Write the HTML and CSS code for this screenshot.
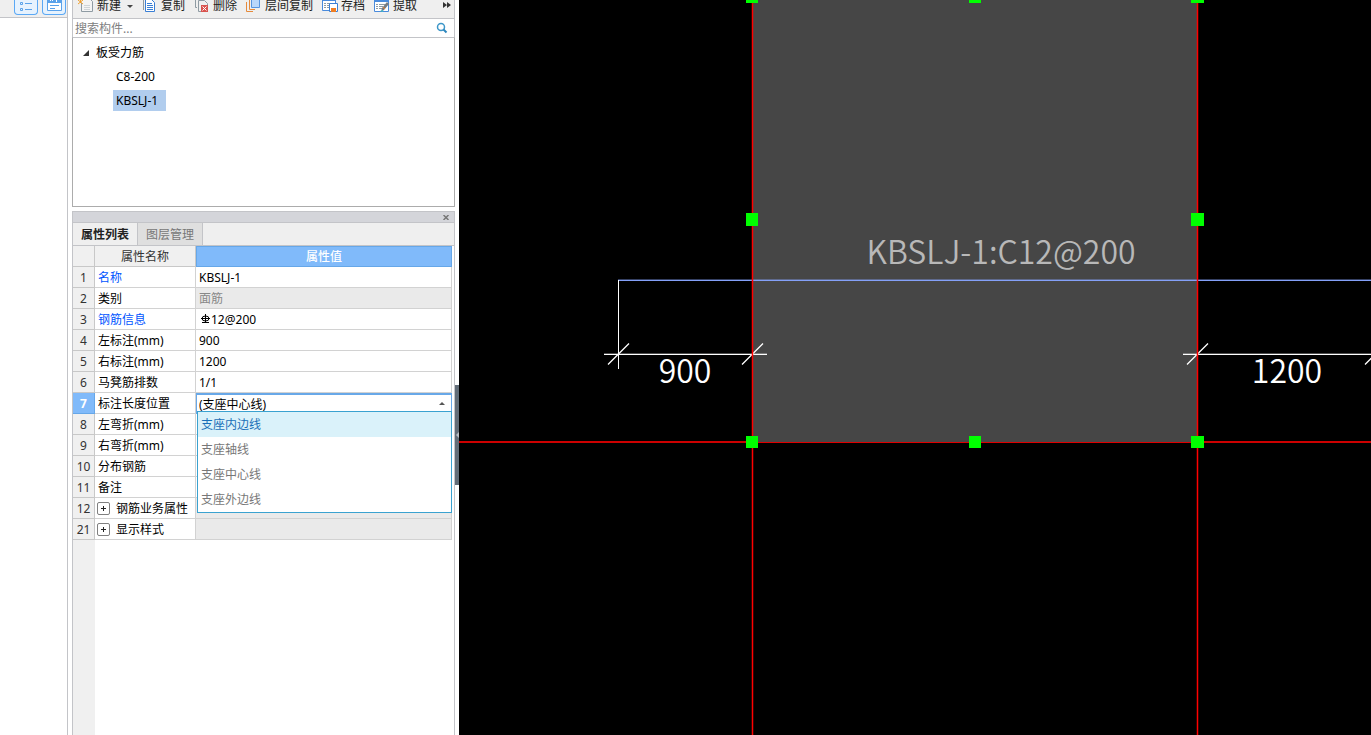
FILE: index.html
```html
<!DOCTYPE html>
<html lang="zh-CN">
<head>
<meta charset="utf-8">
<meta name="viewport" content="width=device-width, initial-scale=1">
<title>构件列表</title>
<link rel="stylesheet" href="styles.css">
</head>
<body>
<div class="app">
  <aside class="nav">
    <div class="nav-bar">
      <button class="nav-btn" type="button" aria-label="列表视图">
        <svg width="22" height="14" viewBox="0 0 22 14"><g fill="none" stroke="#5aa2ea"><path d="M5.500 2.500h2v2h-2zM5.500 8.500h2v2h-2z"/><path d="M10 3.500h7M10 9.500h7"/></g></svg>
      </button>
      <button class="nav-btn" type="button" aria-label="详情视图">
        <svg width="22" height="14" viewBox="0 0 22 14"><path d="M4.500-5V10.500H18.500V-5" fill="#fff" stroke="#5aa2ea"/><path d="M5 0h13v3H5z" fill="#5aa2ea"/><path d="M7 0h1v1H7zM9 0h1v1H9zM13 0h1v2h-1z" fill="#fff"/><path d="M7 5.500h9M7 8.500h5" stroke="#5aa2ea"/></svg>
      </button>
    </div>
  </aside>

  <main class="dock">
    <section class="components">
      <div class="toolbar">
        <button class="tool" type="button"><svg width="16" height="16" viewBox="0 0 16 16"><path d="M3.500 5V13.500H14.500V3.500L11.500.5H6" fill="#f4f4f4" stroke="#8f9ba3"/><path d="M6 7.500h6M6 9.500h6M6 11.500h6" stroke="#cfd4d8"/><path d="M0 2l5 4M5 2L0 6M2.500 1v4" stroke="#f0a030"/></svg>新建<i class="caret"></i></button>
        <button class="tool" type="button"><svg width="16" height="16" viewBox="0 0 16 16"><path d="M1.500 1v11" stroke="#8f9ba3"/><path d="M3.500 1.500h6l3 3v9h-9z" fill="#fff" stroke="#3a7fd5"/><path d="M5 5.500h5M5 7.500h6M5 9.500h6M5 11.500h6" stroke="#3a7fd5"/></svg>复制</button>
        <button class="tool" type="button"><svg width="16" height="16" viewBox="0 0 16 16"><path d="M1.500 0V9.500H3M4.500 2.500h6l3 3v8h-9z" fill="none" stroke="#8f9ba3"/><path d="M7 7h7v7H7z" fill="#d9534f"/><path d="M8.500 8.500l4 4M12.500 8.500l-4 4" stroke="#fff"/></svg>删除</button>
        <button class="tool" type="button"><svg width="16" height="16" viewBox="0 0 16 16"><path d="M.5 4V13.500H7M3.500 2V11.500H9" fill="none" stroke="#e58a3c"/><path d="M5.500.5h8v9h-8z" fill="#b9d7fb" stroke="#5795e0"/></svg>层间复制</button>
        <button class="tool" type="button"><svg width="16" height="16" viewBox="0 0 16 16"><path d="M7 12.500H.5V1.500h13V5" fill="#fff" stroke="#4a8bdc"/><path d="M1 2h12v1H1z" fill="#4a8bdc"/><path d="M2 5.500h2M5 5.500h7M2 7.500h2M5 7.500h2M2 9.500h2M5 9.500h2" stroke="#8f9ba3"/><path d="M7.500 5.500h8v8h-8z" fill="#fff" stroke="#3a7fd5"/><path d="M9 10h5v4H9z" fill="#ef7d22"/></svg>存档</button>
        <button class="tool" type="button"><svg width="16" height="16" viewBox="0 0 16 16"><path d="M.5 1.500h14v12H.5z" fill="#fff" stroke="#4a8bdc"/><path d="M1 2h13v2H1z" fill="#4a8bdc"/><path d="M2 6.500h2M5 6.500h6M2 8.500h2M5 8.500h4M2 10.500h2M5 10.500h3" stroke="#8f9ba3"/><path d="M7 14l1-4 5-6 2 2-5 6z" fill="#777c82"/><path d="M6 13l3-1v2z" fill="#35bcd0"/><path d="M9 9l2 2" stroke="#ef7d22"/></svg>提取</button>
        <button class="more" type="button" aria-label="更多"><svg width="8" height="6" viewBox="0 0 8 6"><path d="M0 0l4 3-4 3zM4 0l4 3-4 3z" fill="#333"/></svg></button>
      </div>
      <div class="search">
        <input class="search-input" type="text" placeholder="搜索构件..." aria-label="搜索构件">
        <button class="search-btn" type="button" aria-label="搜索"><svg width="12" height="12" viewBox="0 0 12 12"><circle cx="5" cy="5" r="3.500" fill="none" stroke="#3c96c8" stroke-width="1.500"/><path d="M7.500 7.500l3 3" stroke="#2c86bd" stroke-width="2"/></svg></button>
      </div>
      <ul class="tree">
        <li><svg class="twisty" width="6" height="6" viewBox="0 0 6 6"><path d="M6 0v6H0z" fill="#333"/></svg><span class="node">板受力筋</span>
          <ul class="branch">
            <li><span class="node">C8-200</span></li>
            <li><span class="node selected">KBSLJ-1</span></li>
          </ul>
        </li>
      </ul>
    </section>

    <section class="props">
      <div class="props-bar"><button class="close" type="button" aria-label="关闭"><svg width="6" height="5" viewBox="0 0 6 5"><path d="M.5 0l5 5M5.500 0l-5 5" stroke="#777" stroke-width="1.500"/></svg></button></div>
      <div class="tabs" role="tablist">
        <button class="tab active" role="tab" aria-selected="true" type="button">属性列表</button>
        <button class="tab" role="tab" aria-selected="false" type="button">图层管理</button>
      </div>
      <div class="sheet">
        <table class="grid">
          <colgroup><col class="c-num"><col class="c-name"><col></colgroup>
          <thead><tr><th class="num"></th><th class="head">属性名称</th><th class="head on">属性值</th></tr></thead>
          <tbody>
            <tr><th class="num">1</th><td class="link">名称</td><td>KBSLJ-1</td></tr>
            <tr><th class="num">2</th><td>类别</td><td class="off">面筋</td></tr>
            <tr><th class="num">3</th><td class="link">钢筋信息</td><td><svg class="rebar" width="12" height="12" viewBox="0 0 12 12"><g fill="none" stroke="#000"><ellipse cx="6.500" cy="4.500" rx="3.500" ry="2.500"/><path d="M6.500 0v9M2 4.500h9M3 8.500h7"/></g></svg>12@200</td></tr>
            <tr><th class="num">4</th><td>左标注(mm)</td><td>900</td></tr>
            <tr><th class="num">5</th><td>右标注(mm)</td><td>1200</td></tr>
            <tr><th class="num">6</th><td>马凳筋排数</td><td>1/1</td></tr>
            <tr><th class="num on">7</th><td><label for="pos">标注长度位置</label></td>
              <td class="editing">
                <select class="combo" id="pos"><option>(支座中心线)</option></select>
                <svg class="combo-arrow" width="6" height="3" viewBox="0 0 6 3"><path d="M3 0l3 3H0z" fill="#555"/></svg>
                <div class="menu" role="listbox">
                  <button class="opt current" role="option" aria-selected="true" type="button">支座内边线</button>
                  <button class="opt" role="option" type="button">支座轴线</button>
                  <button class="opt" role="option" type="button">支座中心线</button>
                  <button class="opt" role="option" type="button">支座外边线</button>
                </div>
              </td></tr>
            <tr><th class="num">8</th><td>左弯折(mm)</td><td></td></tr>
            <tr><th class="num">9</th><td>右弯折(mm)</td><td></td></tr>
            <tr><th class="num">10</th><td>分布钢筋</td><td></td></tr>
            <tr><th class="num">11</th><td>备注</td><td></td></tr>
            <tr><th class="num">12</th><td class="group"><button class="plus" type="button" aria-label="展开"></button>钢筋业务属性</td><td class="off"></td></tr>
            <tr><th class="num">21</th><td class="group"><button class="plus" type="button" aria-label="展开"></button>显示样式</td><td class="off"></td></tr>
          </tbody>
        </table>
      </div>
    </section>
  </main>

  <div class="splitter"><button class="grip" type="button" aria-label="收起面板"><svg width="4" height="6" viewBox="0 0 4 6"><path d="M4 0v6L1 3z" fill="#b8bec4"/></svg></button></div>

  <section class="view" aria-label="绘图区">
    <svg class="drawing" width="100%" height="100%">
      <rect x="293" y="0" width="446" height="442" fill="#464646"/>
      <g stroke="#cc0000" stroke-width="2"><path d="M0 442H293M739 442H2000"/></g>
      <path d="M293 442.500H739" stroke="#e00000"/>
      <path d="M159.500 280.500H2000" stroke="#84a0f8"/>
      <path d="M159 279.500H2000" stroke="#84a0f8" stroke-opacity=".4"/>
      <g stroke="#fff" fill="none">
        <path d="M159.500 280V369M145 354.500H308M724 354.500H2000"/>
        <path d="M145 353.500H308M724 353.500H2000" stroke-opacity=".3"/>
        <path d="M149 364.500L170 343.500M283 364.500L304 343.500M728 364.500L749 343.500M906 364.500L927 343.500" stroke-width="1.300"/>
      </g>
      <path d="M293.500 0V2000M738.500 0V2000" stroke="#f00" stroke-width="1.500"/>
      <g fill="#00ff00">
        <path d="M287 0h12v3h-12zM510 0h12v3h-12zM732 0h13v3h-13z"/>
        <path d="M287 213h12v13h-12zM732 213h13v13h-13zM287 436h12v12h-12zM510 436h12v12h-12zM732 436h13v12h-13z"/>
      </g>
      <text class="mark" x="542" y="264">KBSLJ-1:C12@200</text>
      <text class="dim" x="226" y="383">900</text>
      <text class="dim" x="828" y="383">1200</text>
    </svg>
  </section>
</div>
</body>
</html>
```

FILE: styles.css
```css
* { box-sizing: border-box; }
body {
  margin: 0;
  font: 12px/20px "Noto Sans", "Noto Sans CJK SC", sans-serif;
  color: #000;
  background: #fff;
}
button, input, select { font: inherit; color: inherit; border: 0; padding: 0; margin: 0; background: none; }
ul { list-style: none; margin: 0; padding: 0; }
svg { display: block; flex: none; }

.app { display: flex; height: 100vh; overflow: hidden; }

.nav { flex: 0 0 68px; border-right: 1px solid #c3c4c8; }
.nav-bar {
  display: flex; justify-content: flex-end; gap: 4px;
  height: 18px; padding: 0 1px 2px 0;
  background: #efefef; border-bottom: 1px solid #c3c4c8;
}
.nav-btn {
  display: flex; width: 24px; height: 15px; overflow: hidden;
  background: #e6f2fe; border: 1px solid #5aa8f5; border-top: 0;
  border-radius: 0 0 4px 4px; justify-content: center;
}

.dock { flex: 0 0 387px; display: flex; flex-direction: column; gap: 4px; padding-left: 4px; min-width: 0; }
.components { display: flex; flex-direction: column; height: 207px; }
.toolbar {
  display: flex; align-items: flex-end; gap: 9px; height: 19px; padding: 0 3px 0 5px;
  background: #efefef; border: solid #c3c4c8; border-width: 0 1px 1px; overflow: hidden;
}
.tool { display: flex; flex: none; align-items: center; gap: 3px; height: 24px; color: #222; white-space: nowrap; }
.caret { margin: 0 0 0 3px; border: 3px solid transparent; border-top-color: #444; border-bottom: 0; }
.more { margin: 0 0 10px auto; }
.search { display: flex; align-items: center; height: 18px; border-right: 1px solid #c3c4c8; border-left: 1px solid #c3c4c8; }
.search-input { flex: 1; min-width: 0; height: 18px; padding: 1px 2px 0; outline: 0; }
.search-input::placeholder { color: #808080; opacity: 1; }
.search-btn { margin-right: 6px; }
.tree { flex: 1; border: 1px solid #acacac; border-top-color: #c3c4c8; padding: 3px 0 0 10px; line-height: 24px; }
.tree li { position: relative; }
.twisty { display: inline-block; margin-right: 4px; vertical-align: 1px; }
.branch { padding-left: 30px; }
.node { display: inline-block; padding: 0 3px; line-height: 21px; }
.selected { padding-right: 8px; background: #b1cdee; }

.props { flex: 1; display: flex; flex-direction: column; border: 1px solid #c3c4c8; border-bottom: 0; min-height: 0; }
.props-bar { display: flex; justify-content: flex-end; align-items: center; height: 11px; padding: 0 5px; background: #d4d5da; border-bottom: 1px solid #c3c4c8; }
.tabs { display: flex; height: 23px; background: #efefef; border-bottom: 1px solid #c3c4c8; }
.tab { padding: 1px 8px 0; color: #777; background: #dfdfdf; border-right: 1px solid #c3c4c8; }
.tab.active { color: #222; font-weight: 700; background: #efefef; }

.sheet { flex: 1; padding-right: 2px; background: linear-gradient(to right, #f0f0f0 22px, #fff 22px); }
.grid { width: 100%; table-layout: fixed; border-collapse: separate; border-spacing: 0; }
.c-num { width: 22px; }
.c-name { width: 101px; }
.grid th, .grid td {
  height: 21px; padding: 1px 0 0 3px; line-height: 19px; text-align: left; white-space: nowrap;
  border: solid #d2d2d2; border-width: 0 1px 1px 0; font-weight: 400;
}
.grid td { background: #fff; }
.grid .num { padding: 1px 0 0; text-align: center; color: #333; background: #f0f0f0; border-color: #c8c8c8; }
.grid .head { padding: 1px 0 0; text-align: center; color: #333; background: #f0f0f0; border-color: #c8c8c8; }
.grid .on { color: #fff; font-weight: 700; background: #80bafa; border-color: #66a7e8; }
.grid .head.on { padding: 0; border-width: 1px; line-height: 19px; font-weight: 500; }
.grid .link { color: #0055ff; }
.grid .off { color: #888; background: #eaeaea; }
.rebar { display: inline-block; vertical-align: -2px; }
.grid .editing { position: relative; padding: 0; border: 2px solid #68a8e8; border-width: 2px 1px 0 1px; }
.combo { display: block; width: 100%; height: 18px; padding-left: 2px; line-height: 18px; appearance: none; outline: 0; }
.combo-arrow { position: absolute; right: 6px; top: 7px; }
.menu { position: absolute; z-index: 1; left: 0; right: -1px; top: 16px; background: #fff; border: 1px solid #3aa2d0; }
.opt { display: block; width: 100%; height: 25px; padding-left: 3px; text-align: left; color: #777; }
.opt.current { color: #1a70b8; background: #daf2fa; }
.grid .group { padding-left: 2px; }
.plus {
  display: inline-block; width: 13px; height: 13px; margin-right: 6px; vertical-align: -1px;
  border: 1px solid #808080; border-radius: 2px;
  background: linear-gradient(#222, #222) center / 5px 1px no-repeat, linear-gradient(#222, #222) center / 1px 5px no-repeat, #fff;
}

.splitter { flex: 0 0 4px; display: flex; align-items: center; padding-top: 135px; }
.grip { display: flex; align-items: center; width: 4px; height: 100px; background: #626d78; }

.view { flex: 1; min-width: 0; background: #000; }
.drawing { font-family: "Noto Sans CJK SC", sans-serif; font-size: 32px; }
.mark { fill: #b8b8b8; font-weight: 350; text-anchor: middle; }
.dim { fill: #fff; font-weight: 350; text-anchor: middle; }
```
